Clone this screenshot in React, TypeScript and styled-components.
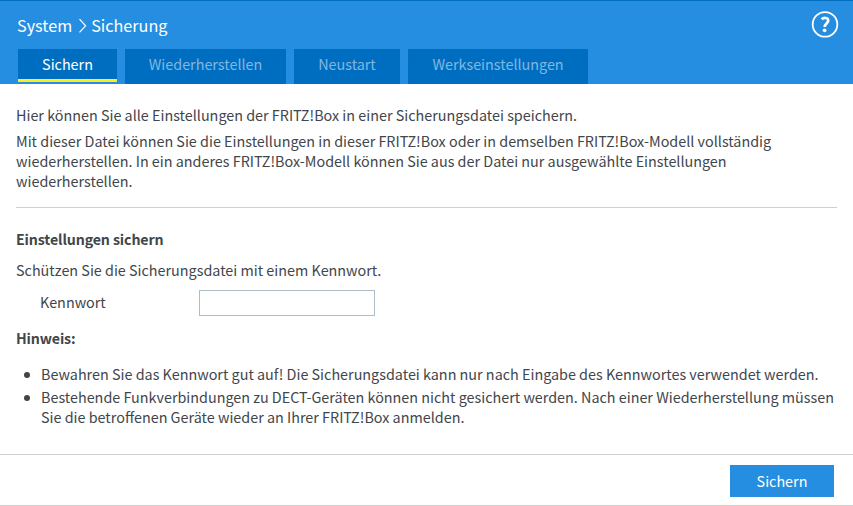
import React from "react";
import styled, { createGlobalStyle } from "styled-components";

const GlobalStyle = createGlobalStyle`
  * { box-sizing: border-box; }
  body {
    margin: 0;
    background: #fff;
    color: #3f464c;
    font-family: "Noto Sans CJK SC", "Noto Sans", sans-serif;
    font-size: 14.36px;
    line-height: 20px;
  }
`;

const Page = styled.div`
  display: flex;
  flex-direction: column;
  height: 506px;
  overflow: hidden;
`;

const Header = styled.header`
  display: flex;
  flex-direction: column;
  justify-content: space-between;
  height: 84px;
  padding: 9px 14px 0 17px;
  border-top: 1px solid #006ec0;
  background: #268ee0;
`;

const TitleRow = styled.div`
  display: flex;
  justify-content: space-between;
`;

const Breadcrumb = styled.h1`
  display: flex;
  align-items: center;
  height: 30px;
  margin: 0;
  color: #fff;
  font-size: 16.2px;
  font-weight: 400;
  line-height: 30px;
`;

const Chevron = styled.svg`
  display: block;
  margin: 2px 4px 0 6px;
`;

const HelpIcon = styled.svg`
  display: block;
`;

const Tabs = styled.nav`
  display: flex;
  gap: 8px;
  padding-left: 1px;
`;

const Tab = styled.a<{ $width: number; $active?: boolean }>`
  width: ${(p) => p.$width}px;
  height: ${(p) => (p.$active ? 33 : 35)}px;
  padding-top: 5px;
  border-bottom: ${(p) => (p.$active ? "3px solid #ffec19" : "0")};
  background: #006ec0;
  color: ${(p) => (p.$active ? "#fff" : "#80b7e0")};
  text-align: center;
`;

const Content = styled.main`
  flex: 1;
  padding: 21px 16px 0;
`;

const Paragraph = styled.p`
  margin: 0 0 6px;
`;

const Divider = styled.hr`
  height: 1px;
  margin: 16px 0 21px;
  border: 0;
  background: #cfcfcf;
`;

const Heading = styled.h2<{ $gap: number }>`
  margin: 0 0 ${(p) => p.$gap}px;
  font-size: 14.2px;
  font-weight: 600;
  line-height: 20px;
  letter-spacing: -0.12px;
`;

const Field = styled.label`
  display: flex;
  align-items: flex-start;
  height: 26px;
  margin: 10px 0 12px;
  padding-left: 24px;
`;

const FieldName = styled.span`
  width: 159px;
  padding-top: 2px;
`;

const PasswordInput = styled.input`
  width: 176px;
  height: 26px;
  padding: 2px 6px;
  border: 1px solid #adbdc6;
  border-radius: 0;
  background: #fff;
  outline: 0;
`;

const Notes = styled.ul`
  display: flex;
  flex-direction: column;
  gap: 3px;
  margin: 0;
  padding: 0;
  list-style: none;
`;

const Note = styled.li`
  display: flex;
  margin-right: -4px;
  padding-left: 7.5px;

  &::before {
    content: "";
    flex: none;
    width: 6px;
    height: 6px;
    margin: 8px 11.5px 0 0;
    border-radius: 50%;
    background: #3f464c;
  }
`;

const Footer = styled.footer`
  display: flex;
  justify-content: flex-end;
  height: 52px;
  padding: 10px 19px 0;
  border: solid #cfcfcf;
  border-width: 1px 0;
`;

const SubmitButton = styled.button`
  width: 104px;
  height: 32px;
  padding: 0;
  border: 0;
  background: #268ee0;
  color: #fff;
  font: inherit;
`;

const tabs = [
  { name: "Sichern", width: 99, active: true },
  { name: "Wiederherstellen", width: 161 },
  { name: "Neustart", width: 106 },
  { name: "Werkseinstellungen", width: 180 },
];

export default function App() {
  return (
    <Page>
      <GlobalStyle />
      <Header>
        <TitleRow>
          <Breadcrumb>
            System
            <Chevron width="9" height="16" viewBox="0 0 9 16" fill="none" stroke="#fff" strokeWidth="1.2">
              <path d="M1.5 1.2 7.6 7.8 1.5 14.4" />
            </Chevron>
            Sicherung
          </Breadcrumb>
          <HelpIcon width="28" height="29" viewBox="0 0 28 29" fill="none" stroke="#fff">
            <circle cx="14" cy="14.4" r="12.3" strokeWidth="1.8" />
            <path d="M10.6 9.2C12.4 7.6 17.2 7.1 17.2 10.6c0 2.8-3.5 3.1-3.5 6.4" strokeWidth="2.7" />
            <circle cx="13.6" cy="20.3" r="1.9" fill="#fff" stroke="none" />
          </HelpIcon>
        </TitleRow>
        <Tabs>
          {tabs.map((tab) => (
            <Tab key={tab.name} $width={tab.width} $active={tab.active}>
              {tab.name}
            </Tab>
          ))}
        </Tabs>
      </Header>
      <Content>
        <Paragraph>
          Hier können Sie alle Einstellungen der FRITZ!Box in einer Sicherungsdatei speichern.
        </Paragraph>
        <Paragraph>
          Mit dieser Datei können Sie die Einstellungen in dieser FRITZ!Box oder in demselben FRITZ!Box-Modell vollständig
          <br />
          wiederherstellen. In ein anderes FRITZ!Box-Modell können Sie aus der Datei nur ausgewählte Einstellungen
          <br />
          wiederherstellen.
        </Paragraph>
        <Divider />
        <Heading $gap={11}>Einstellungen sichern</Heading>
        <Paragraph>Schützen Sie die Sicherungsdatei mit einem Kennwort.</Paragraph>
        <Field>
          <FieldName>Kennwort</FieldName>
          <PasswordInput type="text" />
        </Field>
        <Heading $gap={16}>Hinweis:</Heading>
        <Notes>
          <Note>
            <span>
              Bewahren Sie das Kennwort gut auf! Die Sicherungsdatei kann nur nach Eingabe des Kennwortes verwendet werden.
            </span>
          </Note>
          <Note>
            <span>
              Bestehende Funkverbindungen zu DECT-Geräten können nicht gesichert werden. Nach einer Wiederherstellung müssen
              <br />
              Sie die betroffenen Geräte wieder an Ihrer FRITZ!Box anmelden.
            </span>
          </Note>
        </Notes>
      </Content>
      <Footer>
        <SubmitButton>Sichern</SubmitButton>
      </Footer>
    </Page>
  );
}
